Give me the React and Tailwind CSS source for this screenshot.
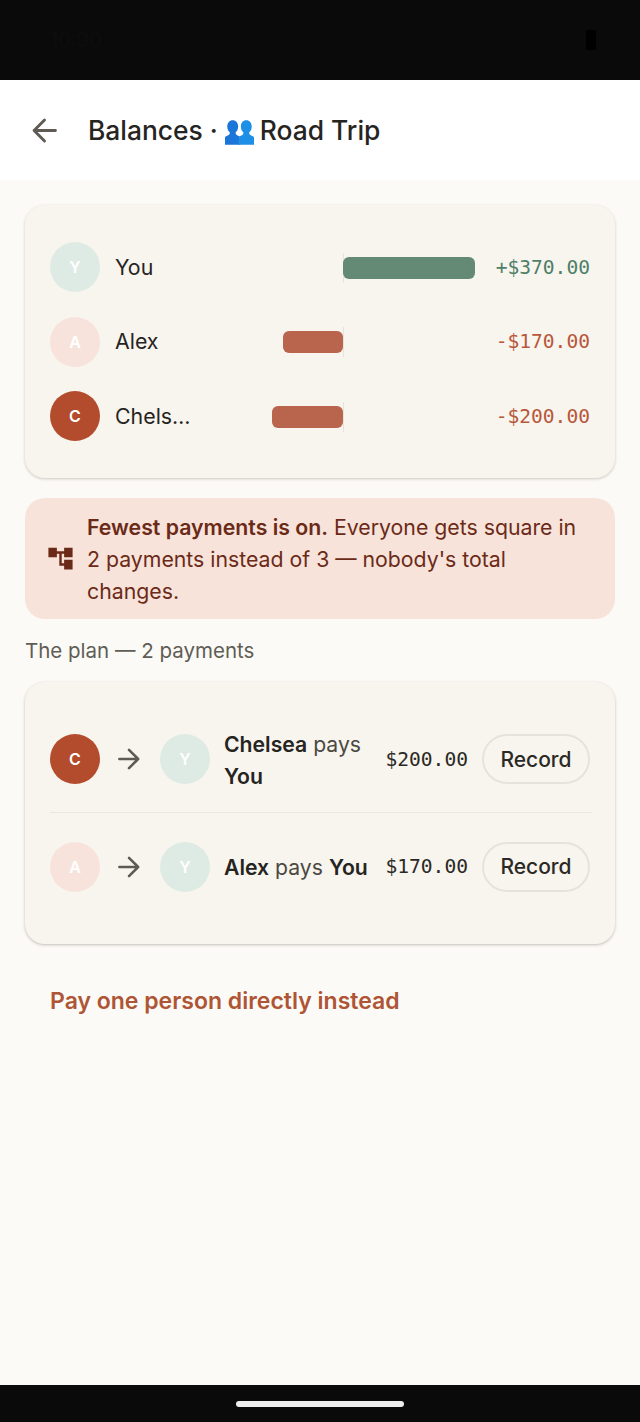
import React from "react";
import { MdAccountTree } from "react-icons/md";

const balances = [
  { key: "you", label: "Y", name: "You", amount: "+$370.00", width: 132, positive: true, tone: "you" },
  { key: "alex", label: "A", name: "Alex", amount: "-$170.00", width: 60, tone: "alex" },
  { key: "chelsea", label: "C", name: "Chels…", amount: "-$200.00", width: 71, tone: "chelsea" },
];

const avatarTones = {
  you: "bg-[#deebe4]",
  alex: "bg-[#f7e3dc]",
  chelsea: "bg-[#b34c2d]",
};

function Avatar({ label, tone }) {
  return (
    <div
      className={`flex h-[50px] w-[50px] shrink-0 items-center justify-center rounded-full text-[16px] font-semibold text-white ${avatarTones[tone]}`}
    >
      {label}
    </div>
  );
}

function ArrowIcon({ flip, className }) {
  return (
    <svg
      viewBox="0 0 24 24"
      fill="none"
      stroke="currentColor"
      strokeWidth="2.8"
      strokeLinecap="round"
      strokeLinejoin="round"
      className={className}
    >
      {flip ? <path d="M22.5 12H2M12 2 2 12l10 10" /> : <path d="M1.5 12H22M12 2l10 10-10 10" />}
    </svg>
  );
}

function PeopleEmoji() {
  const bust = "M8.500 0c3.600 0 6 2.800 6 7 0 3-1.100 5-2.700 6.300v1.500c0 1.200 2.700 1.700 5.200 3.700V27H0v-8.500c2.500-2 5.200-2.500 5.200-3.700v-1.500C3.600 12 2.500 10 2.500 7c0-4.200 2.400-7 6-7z";
  return (
    <svg viewBox="0 0 32 27" className="ml-[7px] mr-[6px] inline-block h-[27px] w-[29px] align-[-6px]">
      <path d={bust} fill="#1c75d8" />
      <path d={bust} fill="#1e8fe6" transform="translate(15 0)" />
    </svg>
  );
}

function BalanceRow({ item }) {
  return (
    <div className="flex h-[50px] items-center">
      <Avatar label={item.label} tone={item.tone} />
      <div className="ml-[15px] mt-[1px] w-[96px] shrink-0 text-[21.33px] text-[#26241f]">{item.name}</div>
      <div className="mt-[1px] flex h-[30px] w-[264px] shrink-0">
        <div className="flex w-[132px] items-center justify-end">
          {!item.positive && (
            <div className="h-[22px] rounded-[6px] bg-[#b9654e]" style={{ width: item.width }} />
          )}
        </div>
        <div className="flex w-[132px] items-center border-l border-[#e8e3da]">
          {item.positive && (
            <div className="-ml-px h-[22px] rounded-[6px] bg-[#648a76]" style={{ width: item.width }} />
          )}
        </div>
      </div>
      <div
        className={`ml-auto mt-[1px] font-['DejaVu_Sans_Mono',monospace] text-[19.6px] ${
          item.positive ? "text-[#4f7f68]" : "text-[#b9573c]"
        }`}
      >
        {item.amount}
      </div>
    </div>
  );
}

function PaymentRow({ from, fromTone, children, amount, divider }) {
  return (
    <div className={`-mr-[2px] flex h-[107px] items-center pr-[2px] ${divider ? "border-b border-[#ece8df]" : ""}`}>
      <Avatar label={from} tone={fromTone} />
      <ArrowIcon className="ml-[18px] mr-[20px] h-[22px] w-[22px] shrink-0 text-[#5f5b53]" />
      <Avatar label="Y" tone="you" />
      <div className="ml-[14px] mt-[1px] w-[150px] shrink-0 text-[21.2px] leading-[32px] text-[#4b4842]">
        {children}
      </div>
      <div className="ml-auto mt-[1px] font-['DejaVu_Sans_Mono',monospace] text-[19.6px] text-[#2b2925]">
        {amount}
      </div>
      <button className="ml-[14px] h-[50px] w-[108px] shrink-0 rounded-full border-2 border-[#e7e3da] pt-[1px] text-[21px] font-medium text-[#2b2925]">
        Record
      </button>
    </div>
  );
}

export default function App() {
  return (
    <div className="flex h-[1422px] w-[640px] flex-col overflow-hidden bg-[#fcfaf6] font-['Inter',sans-serif]">
      {/* status bar, nearly black on black */}
      <div className="flex h-[80px] shrink-0 items-center justify-between bg-[#0a0a0a] pl-[50px] pr-[44px] text-[#0d0d0d]">
        <span className="text-[20px]">10:00</span>
        <div className="h-[20px] w-[10px] rounded-[2px] bg-[#000000]" />
      </div>

      <div className="flex h-[100px] shrink-0 items-center bg-white pl-[32px]">
        <ArrowIcon flip className="h-[25px] w-[25px] text-[#5f5b53]" />
        <h1 className="ml-[31px] mt-[2px] text-[26.4px] font-medium leading-none text-[#26241f]">
          Balances ·<PeopleEmoji />Road Trip
        </h1>
      </div>

      <div className="flex flex-1 flex-col px-[25px] pt-[25px]">
        <div className="flex h-[273px] flex-col justify-center gap-[24.5px] rounded-[20px] bg-[#f8f5ee] px-[25px] shadow-[0_1px_3px_rgba(60,50,40,0.25)]">
          {balances.map((item) => (
            <BalanceRow key={item.key} item={item} />
          ))}
        </div>

        <div className="mt-[20px] flex h-[121px] items-center rounded-[20px] bg-[#f7e3da] pl-[21px] pr-[24px] text-[#6b2a17]">
          <MdAccountTree className="h-[29px] w-[29px] shrink-0" />
          <p className="ml-[12px] text-[21.28px] leading-[32px]">
            <strong className="font-semibold">Fewest payments is on.</strong> Everyone gets square in
            2 payments instead of 3 — nobody's total changes.
          </p>
        </div>

        <div className="mt-[19px] text-[20.5px] leading-[26px] text-[#5f5d55]">The plan — 2 payments</div>

        <div className="mt-[18px] flex h-[262px] flex-col justify-center rounded-[20px] bg-[#f8f5ee] px-[25px] shadow-[0_1px_3px_rgba(60,50,40,0.3)]">
          <PaymentRow from="C" fromTone="chelsea" amount="$200.00" divider>
            <b className="font-semibold text-[#26241f]">Chelsea</b> pays{" "}
            <b className="font-semibold text-[#26241f]">You</b>
          </PaymentRow>
          <PaymentRow from="A" fromTone="alex" amount="$170.00">
            <span className="whitespace-nowrap">
              <b className="font-semibold text-[#26241f]">Alex</b> pays{" "}
              <b className="font-semibold text-[#26241f]">You</b>
            </span>
          </PaymentRow>
        </div>

        <button className="ml-[25px] mt-[43px] self-start text-[23px] font-semibold leading-[28px] text-[#ae5535]">
          Pay one person directly instead
        </button>
      </div>

      <div className="flex h-[37px] shrink-0 items-start justify-center bg-[#0a0a0a] pt-[16px]">
        <div className="h-[6px] w-[168px] rounded-full bg-[#eeeeee]" />
      </div>
    </div>
  );
}
